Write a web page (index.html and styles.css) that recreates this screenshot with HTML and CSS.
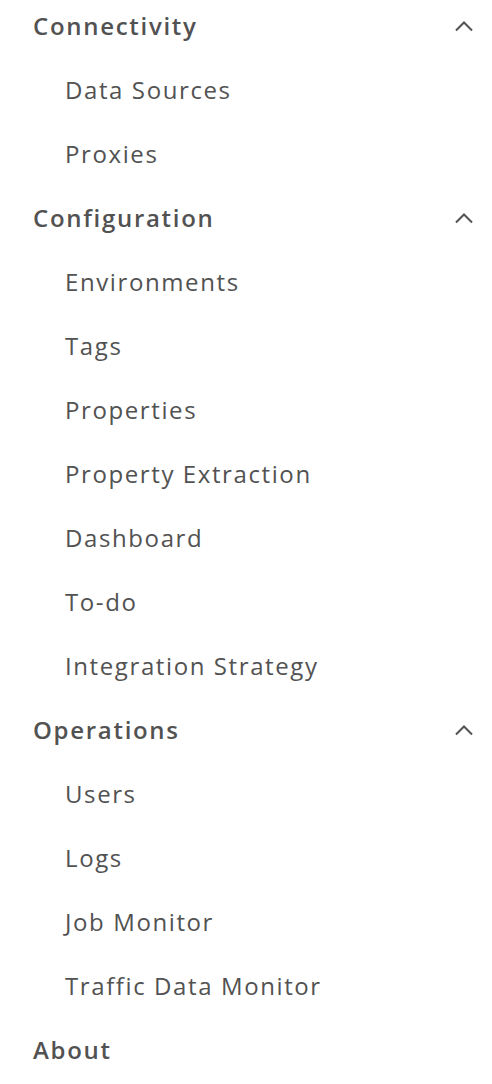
FILE: index.html
```html
<!DOCTYPE html>
<html lang="en">
<head>
<meta charset="utf-8">
<title>Navigation</title>
<link rel="stylesheet" href="styles.css">
</head>
<body>
<nav class="sidenav">
  <div class="group">
    <div class="group-head">
      <span class="group-title">Connectivity</span>
      <svg class="chevron" viewBox="0 0 20 12" width="20" height="12"><path d="M2 10.5 L10 2.5 L18 10.5"/></svg>
    </div>
    <ul class="items">
      <li class="item">Data Sources</li>
      <li class="item">Proxies</li>
    </ul>
  </div>
  <div class="group">
    <div class="group-head">
      <span class="group-title">Configuration</span>
      <svg class="chevron" viewBox="0 0 20 12" width="20" height="12"><path d="M2 10.5 L10 2.5 L18 10.5"/></svg>
    </div>
    <ul class="items">
      <li class="item">Environments</li>
      <li class="item">Tags</li>
      <li class="item">Properties</li>
      <li class="item">Property Extraction</li>
      <li class="item">Dashboard</li>
      <li class="item">To-do</li>
      <li class="item">Integration Strategy</li>
    </ul>
  </div>
  <div class="group">
    <div class="group-head">
      <span class="group-title">Operations</span>
      <svg class="chevron" viewBox="0 0 20 12" width="20" height="12"><path d="M2 10.5 L10 2.5 L18 10.5"/></svg>
    </div>
    <ul class="items">
      <li class="item">Users</li>
      <li class="item">Logs</li>
      <li class="item">Job Monitor</li>
      <li class="item">Traffic Data Monitor</li>
    </ul>
  </div>
  <div class="group">
    <div class="group-head">
      <span class="group-title">About</span>
    </div>
  </div>
</nav>
</body>
</html>
```

FILE: styles.css
```css
html, body {
  margin: 0;
  padding: 0;
  background: #ffffff;
}
body {
  font-family: "Open Sans", "Noto Sans", "Liberation Sans", sans-serif;
  color: #525252;
}
.sidenav {
  display: flex;
  flex-direction: column;
  margin-top: -7px;
}
.group-head {
  height: 64px;
  display: flex;
  align-items: center;
  justify-content: space-between;
  padding: 0 18px 0 33px;
}
.group-title {
  font-size: 24px;
  font-weight: 600;
  letter-spacing: 1.7px;
  color: #525252;
}
.chevron {
  margin-top: 2px;
}
.chevron path {
  fill: none;
  stroke: #525252;
  stroke-width: 2;
}
.items {
  list-style: none;
  margin: 0;
  padding: 0;
}
.item {
  height: 64px;
  display: flex;
  align-items: center;
  padding-left: 65px;
  font-size: 24px;
  font-weight: 400;
  letter-spacing: 1.6px;
  color: #525252;
}
```
